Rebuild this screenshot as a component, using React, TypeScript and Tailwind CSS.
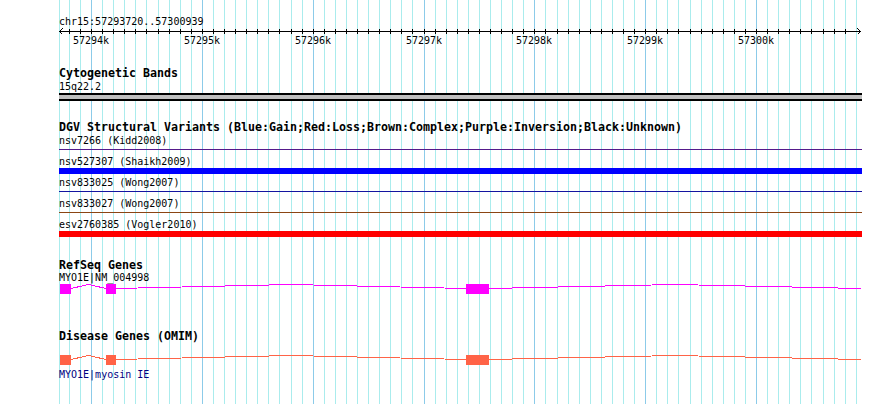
import React from 'react';

// view: chr15:57293720..57300939, drawn from x=60, ~110.8px per kb
const START = 57293720;
const X0 = 60;
const PX_PER_BP = 0.11083;

const toX = (pos: number) => Math.round(X0 + (pos - START) * PX_PER_BP);

const MINOR = '#aaeced';
const MAJOR = '#8ccbe9';

const gridPositions: number[] = [];
for (let p = 57293800; p <= 57300900; p += 100) gridPositions.push(p);

const tickPositions = gridPositions.filter(p => p <= 57300800);
const kbLabels = [57294, 57295, 57296, 57297, 57298, 57299, 57300];

interface Variant {
    label: string;
    kind: 'line' | 'bar';
    color: string;
}

const variants: Variant[] = [
    { label: 'nsv7266 (Kidd2008)', kind: 'line', color: 'bg-[#551a8b]' },
    { label: 'nsv527307 (Shaikh2009)', kind: 'bar', color: 'bg-[#0000ff]' },
    { label: 'nsv833025 (Wong2007)', kind: 'line', color: 'bg-[#1414a0]' },
    { label: 'nsv833027 (Wong2007)', kind: 'line', color: 'bg-[#8b4513]' },
    { label: 'esv2760385 (Vogler2010)', kind: 'bar', color: 'bg-[#ff0000]' },
];

const exons: [number, number][] = [[60, 71], [106, 116], [466, 489]];
const introns: [number, number][] = [[71, 106], [116, 466], [489, 861]];

const GridLines: React.FC = () => (
    <svg className="absolute inset-0" width={890} height={404} shapeRendering="crispEdges">
        <line x1={59.5} x2={59.5} y1={0} y2={404} stroke={MINOR} />
        {gridPositions.map(p => {
            const x = toX(p) + 0.5;
            return <line key={p} x1={x} x2={x} y1={0} y2={404} stroke={p % 1000 === 0 ? MAJOR : MINOR} />;
        })}
    </svg>
);

const Ruler: React.FC = () => (
    <svg width={890} height={20} className="block" shapeRendering="crispEdges">
        <line x1={59} x2={861} y1={3.5} y2={3.5} stroke="#000" />
        <polyline points="62.5,0.5 59.5,3.5 62.5,6.5" fill="none" stroke="#000" />
        <polyline points="857.5,0.5 860.5,3.5 857.5,6.5" fill="none" stroke="#000" />
        {tickPositions.map(p => {
            const x = toX(p) + 0.5;
            return <line key={p} x1={x} x2={x} y1={1} y2={6} stroke="#000" />;
        })}
        {kbLabels.map(k => (
            <text key={k} x={toX(k * 1000)} y={15.5} textAnchor="middle" fontSize={10} fill="#000">
                {k}k
            </text>
        ))}
    </svg>
);

// 15q22.2 band: grey body between two black edges
const CytoBand: React.FC = () => (
    <svg width={890} height={8} className="block" shapeRendering="crispEdges">
        <rect x={59} y={0} width={803} height={8} fill="#000000" />
        <rect x={59} y={2} width={803} height={4} fill="#c0c0c0" />
    </svg>
);

const GeneModel: React.FC<{ color: string }> = ({ color }) => (
    <svg width={890} height={10} className="block" shapeRendering="crispEdges">
        {introns.map(([a, b]) => (
            <polyline
                key={a}
                points={`${a},4.5 ${(a + b) / 2},0.5 ${b},4.5`}
                fill="none"
                stroke={color}
                strokeWidth={1}
            />
        ))}
        {exons.map(([a, b]) => (
            <rect key={a} x={a} y={0} width={b - a} height={10} fill={color} />
        ))}
    </svg>
);

const TrackTitle: React.FC<{ children: React.ReactNode; className?: string }> = ({ children, className = '' }) => (
    <div className={`pl-[59px] text-[11.63px] font-bold whitespace-nowrap ${className}`}>{children}</div>
);

const Label: React.FC<{ children: React.ReactNode; className?: string }> = ({ children, className = '' }) => (
    <div className={`pl-[59px] h-[13px] leading-[13px] text-[10px] whitespace-nowrap ${className}`}>{children}</div>
);

export default function App() {
    return (
        <div className="relative w-[890px] h-[404px] overflow-hidden bg-white text-black font-['DejaVu_Sans_Mono','Liberation_Mono',monospace]">
            <GridLines />

            <div className="relative flex flex-col pt-[15px]">
                {/* Ruler */}
                <Label>chr15:57293720..57300939</Label>
                <Ruler />

                {/* Cytogenetic Bands */}
                <TrackTitle className="mt-[19px] h-[13px] leading-[13px]">Cytogenetic Bands</TrackTitle>
                <Label>15q22.2</Label>
                <CytoBand />

                {/* DGV */}
                <TrackTitle className="mt-[20px] h-[13px] leading-[13px]">
                    DGV Structural Variants (Blue:Gain;Red:Loss;Brown:Complex;Purple:Inversion;Black:Unknown)
                </TrackTitle>
                {variants.map(v => (
                    <div key={v.label} className="flex flex-col">
                        <Label>{v.label}</Label>
                        <div className="h-[8px]">
                            {v.kind === 'line' ? (
                                <div className={`ml-[59px] w-[803px] h-px mt-[2px] ${v.color}`} />
                            ) : (
                                <div className={`ml-[59px] w-[803px] h-[6px] ${v.color}`} />
                            )}
                        </div>
                    </div>
                ))}

                {/* RefSeq */}
                <TrackTitle className="mt-[21px] h-[11px] leading-[11px]">RefSeq Genes</TrackTitle>
                <Label>MYO1E|NM_004998</Label>
                <GeneModel color="#ff00ff" />

                {/* OMIM */}
                <TrackTitle className="mt-[36px] h-[13px] leading-[13px]">Disease Genes (OMIM)</TrackTitle>
                <div className="mt-[12px]">
                    <GeneModel color="#ff6347" />
                </div>
                <Label className="mt-[3px] text-[#000080]">MYO1E|myosin IE</Label>
            </div>
        </div>
    );
}
